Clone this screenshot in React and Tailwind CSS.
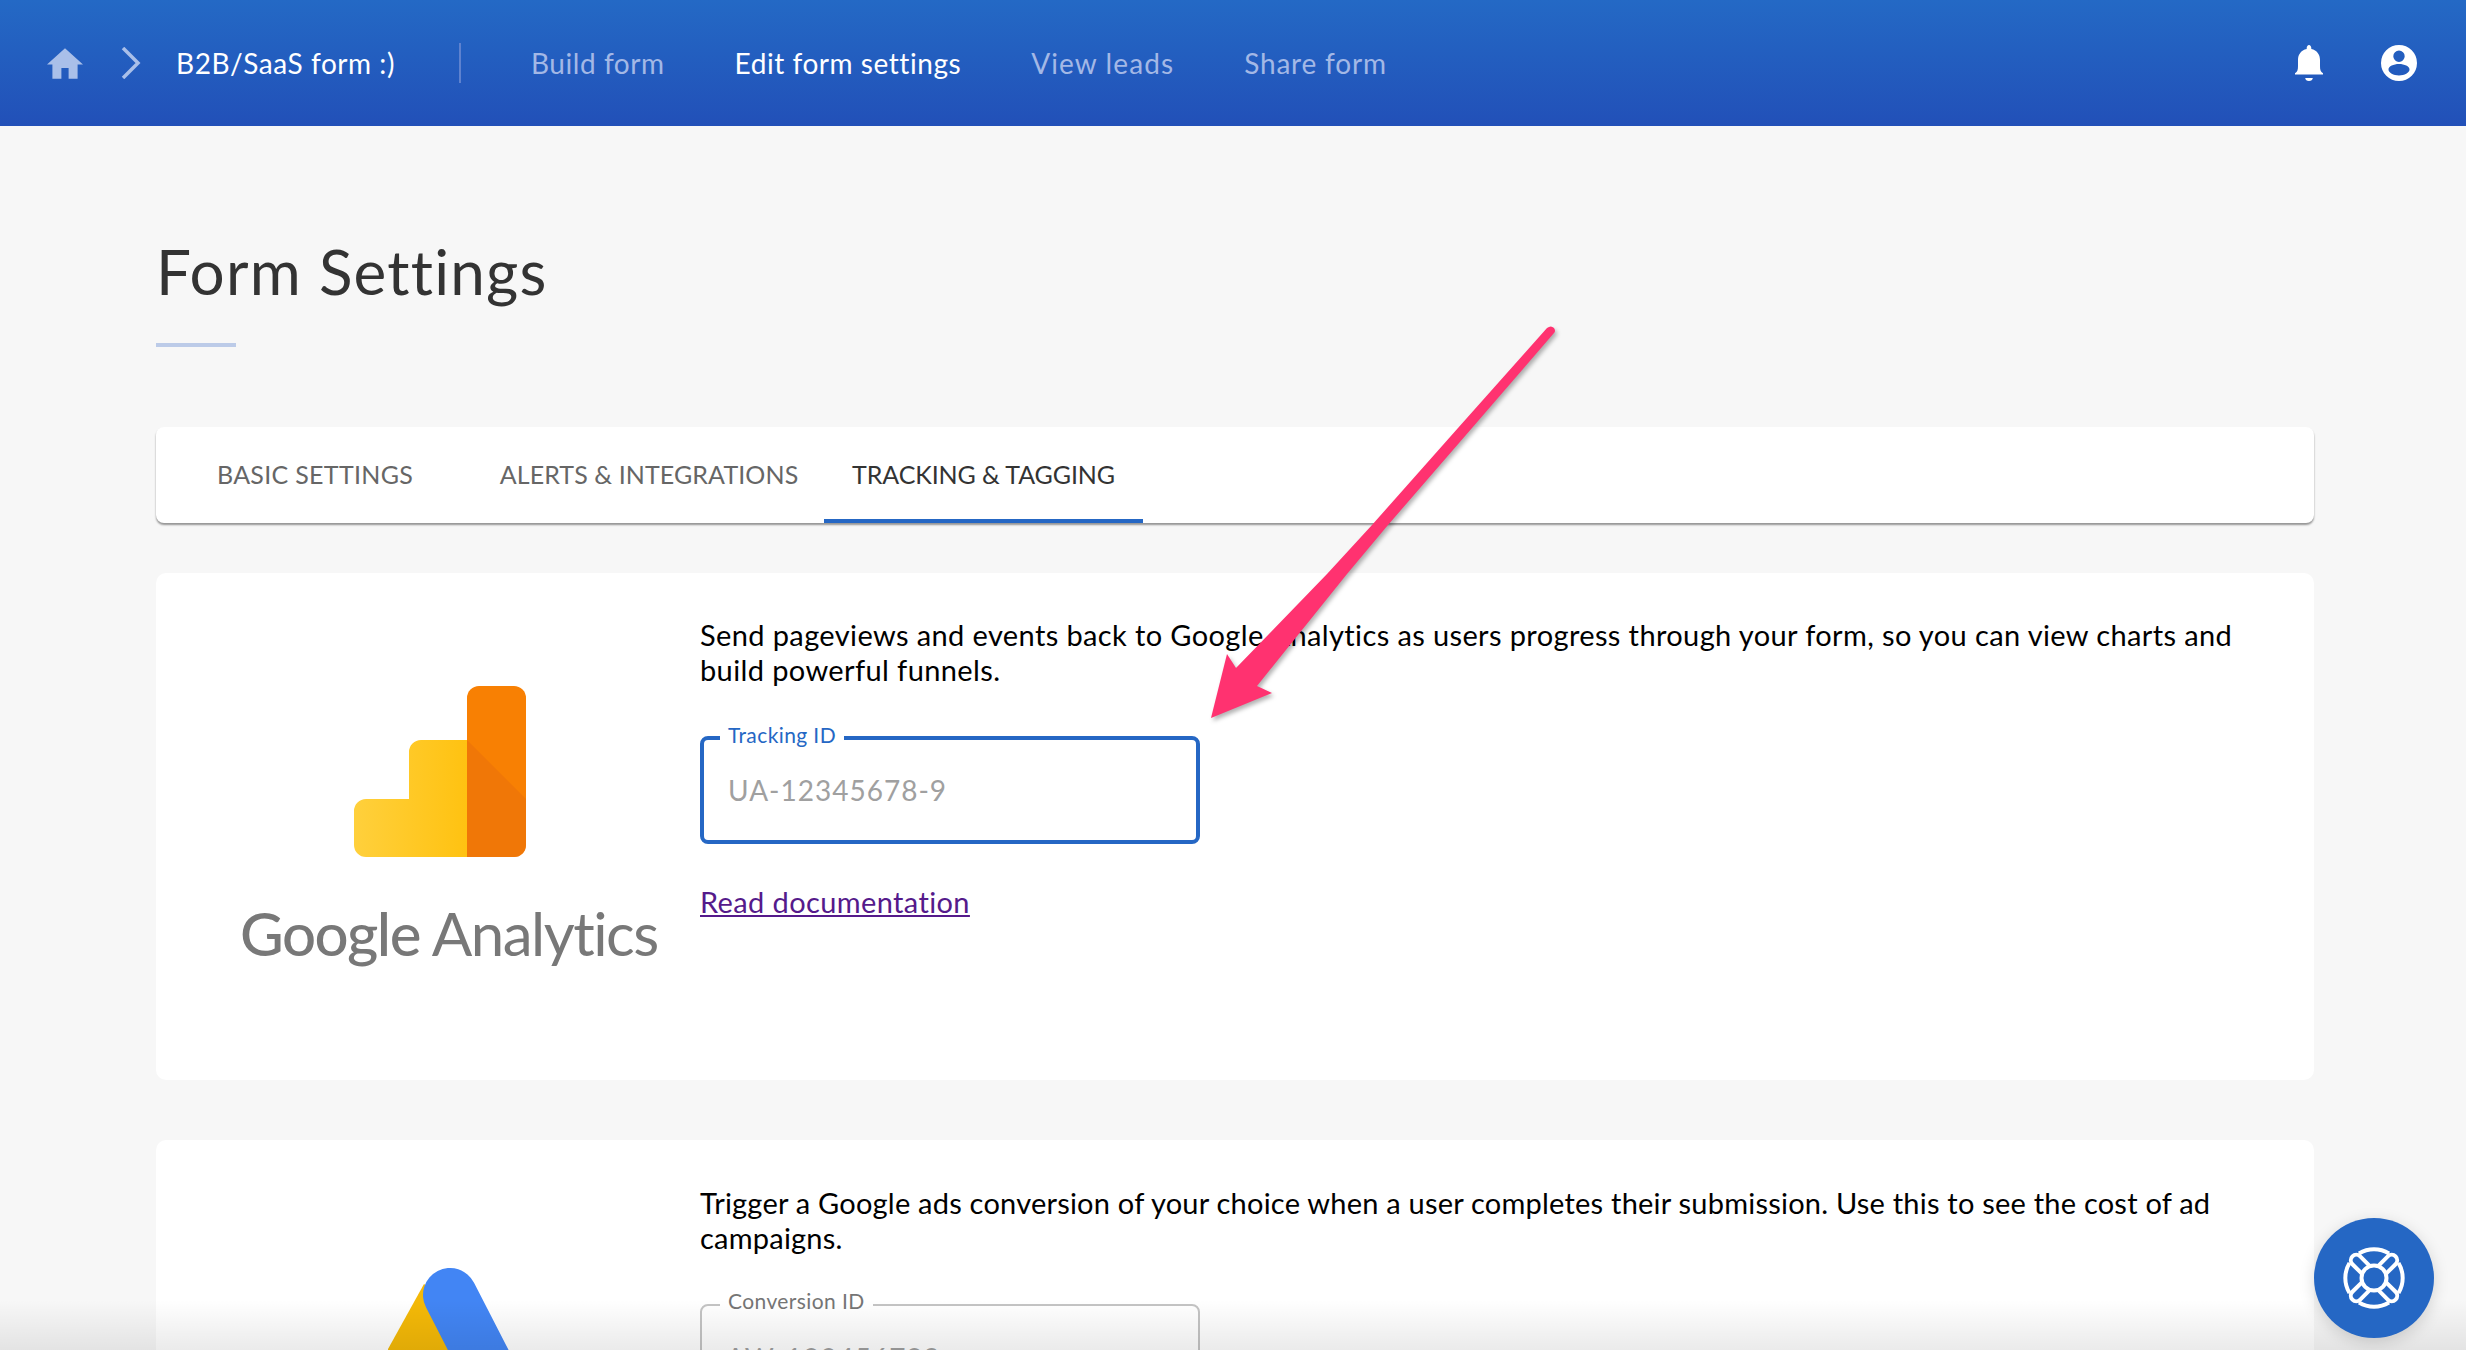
import { useState } from "react";

const NAV = [
  { label: "Build form", className: "text-[#a3b8e6]" },
  { label: "Edit form settings", className: "text-white" },
  { label: "View leads", className: "text-[#a3b8e6] tracking-[1.1px]" },
  { label: "Share form", className: "text-[#a3b8e6] tracking-[0.8px]" },
];

const TABS = [
  { label: "BASIC SETTINGS", className: "w-[318px] tracking-[0.3px] border-b-transparent text-[#666666]" },
  { label: "ALERTS & INTEGRATIONS", className: "w-[350px] tracking-[0.1px] border-b-transparent text-[#666666]" },
  { label: "TRACKING & TAGGING", className: "w-[319px] tracking-[-0.1px] border-b-[#2567c4] text-[#333333]" },
];

function HomeIcon() {
  return (
    <svg width="36" height="36" viewBox="2 3 20 17" className="w-[36px] h-[31px] fill-[#a9bfe9]">
      <path d="M10 20v-6h4v6h5v-8h3L12 3 2 12h3v8z" />
    </svg>
  );
}

function Chevron() {
  return (
    <svg viewBox="0 0 20 32" className="w-[20px] h-[32px] fill-none stroke-[#a9bfe9] stroke-[3.5]">
      <path d="M2 1l15 15L2 31" />
    </svg>
  );
}

function BellIcon() {
  return (
    <svg viewBox="0 0 28 36" className="w-[28px] h-[36px] fill-white">
      <path d="M14 36c2.2 0 3.6-1.3 3.8-3H10.200c.2 1.700 1.600 3 3.800 3zM28 29.500v-1.200c-2.500-1.800-3-3.500-3-7.300v-6c0-5.500-3-9.600-8.700-10.900V3c0-1.500-1-3-2.300-3s-2.300 1.500-2.300 3v1.100C6 5.400 3 9.500 3 15v6c0 3.800-.5 5.500-3 7.300v1.200z" />
    </svg>
  );
}

function AccountIcon() {
  return (
    <svg viewBox="0 0 36 36" className="w-[36px] h-[36px] fill-white">
      <path
        fillRule="evenodd"
        d="M18 0a18 18 0 1 1 0 36a18 18 0 0 1 0-36zM18 5.500a5.700 5.700 0 1 0 0 11.400a5.700 5.700 0 0 0 0-11.400zM18 19c-5.500 0-10.500 2.300-10.500 5.500S12.500 30.500 18 30.500s10.500-2.800 10.500-6S23.500 19 18 19z"
      />
    </svg>
  );
}

function LifeRing() {
  const arms = [45, 135, 225, 315];
  const arcs = [0, 90, 180, 270];
  return (
    <svg viewBox="-32 -32 64 64" className="w-[64px] h-[64px] fill-none stroke-white stroke-[4]">
      <circle r="12.500" />
      {arms.map((deg) => (
        <path key={deg} transform={`rotate(${deg})`} strokeLinecap="round" d="M-5.500 -12V-25a5.500 5.500 0 0 1 11 0V-12" />
      ))}
      {arcs.map((deg) => (
        <path key={deg} transform={`rotate(${deg})`} d="M-15 -24.500A29 29 0 0 1 15 -24.500" />
      ))}
    </svg>
  );
}

function AnalyticsLogo() {
  return (
    <svg viewBox="0 0 172 171" className="w-[172px] h-[171px]">
      <defs>
        <linearGradient id="gaYellow" x1="0" x2="1" y1="0" y2="0">
          <stop offset="0" stopColor="#ffd03c" />
          <stop offset="1" stopColor="#ffc211" />
        </linearGradient>
      </defs>
      <path d="M113 54H67a12 12 0 0 0-12 12v47H12a12 12 0 0 0-12 12v34a12 12 0 0 0 12 12h101z" fill="url(#gaYellow)" />
      <path d="M113 12a12 12 0 0 1 12-12h35a12 12 0 0 1 12 12v147a12 12 0 0 1-12 12h-47z" fill="#f88003" />
      <path d="M113 54l59 59v46a12 12 0 0 1-12 12h-47z" fill="#ee7409" opacity="0.75" />
    </svg>
  );
}

function AdsLogo() {
  return (
    <svg viewBox="0 0 126 110" className="w-[126px] h-[110px]">
      <path d="M36 16L0 81v29h70V40z" fill="#f4b907" />
      <path d="M62 27L120 140" fill="none" stroke="#4285f4" strokeWidth="54" strokeLinecap="round" />
    </svg>
  );
}

function TrackingField({ label, placeholder, focused }) {
  const [value, setValue] = useState("");
  return (
    <div
      className={
        "relative w-[500px] h-[108px] rounded-[8px] " +
        (focused ? "border-[4px] border-[#2567c4]" : "border-2 border-[#c4c4c4]")
      }
    >
      <span
        className={
          "absolute top-[-19px] px-[8px] bg-white text-[21px] leading-[28px] tracking-[0.4px] " +
          (focused ? "left-[16px] text-[#2567c4]" : "left-[18px] text-[#757575]")
        }
      >
        {label}
      </span>
      <input
        value={value}
        onChange={(e) => setValue(e.target.value)}
        placeholder={placeholder}
        className="w-full h-full px-[24px] bg-transparent text-[28px] tracking-[1px] outline-none placeholder:text-[#a0a0a0]"
      />
    </div>
  );
}

function Arrow() {
  return (
    <svg
      viewBox="0 0 360 410"
      className="absolute left-[1200px] top-[321px] w-[360px] h-[410px] drop-shadow-[2px_3px_2px_rgba(0,0,0,0.3)]"
    >
      <path
        d="M347 7Q351 4 354 7Q356 10 354 12L272 107L188 204L147 253L57 365L72 372L11 397L27 333L36 347L127 253L172 204L258 107Z"
        fill="#ff3270"
      />
    </svg>
  );
}

export default function App() {
  return (
    <div className="relative w-[2466px] h-[1350px] overflow-hidden bg-[#f7f7f7] font-['Lato',sans-serif]">
      <header className="h-[126px] flex items-center bg-gradient-to-b from-[#2469c5] to-[#2250b8] text-[28px] tracking-[0.55px]">
        <div className="ml-[47px]">
          <HomeIcon />
        </div>
        <div className="ml-[38px]">
          <Chevron />
        </div>
        <span className="ml-[35px] w-[283px] text-white">B2B/SaaS form :)</span>
        <div className="w-[2px] h-[40px] bg-[#5e82cf]" />
        <nav className="ml-[70px] flex gap-[70px]">
          {NAV.map((item) => (
            <a key={item.label} className={item.className}>
              {item.label}
            </a>
          ))}
        </nav>
        <div className="ml-auto mr-[49px] flex items-center gap-[58px]">
          <BellIcon />
          <AccountIcon />
        </div>
      </header>

      <main className="pl-[156px] pr-[152px]">
        <h1 className="mt-[109px] text-[62px] leading-[72px] tracking-[1.2px] text-[#333333]">Form Settings</h1>
        <div className="mt-[36px] w-[80px] h-[4px] bg-[#bccbe8]" />

        <div className="mt-[80px] h-[96px] flex rounded-[8px] bg-white shadow-[0_2px_2px_rgba(0,0,0,0.4)]">
          {TABS.map((tab) => (
            <div
              key={tab.label}
              className={
                "h-full flex items-center justify-center border-y-[4px] border-t-transparent text-[25px] " + tab.className
              }
            >
              {tab.label}
            </div>
          ))}
        </div>

        <section className="mt-[50px] h-[507px] flex rounded-[10px] bg-white">
          <div className="w-[544px] pt-[113px]">
            <div className="ml-[198px]">
              <AnalyticsLogo />
            </div>
            <div className="ml-[84px] mt-[38px] text-[60px] leading-[76px] text-[#787878] tracking-[-1.5px] whitespace-nowrap">
              <span className="font-medium">Google</span> Analytics
            </div>
          </div>
          <div className="pt-[44px] w-[1570px] text-[29px] leading-[35px] tracking-[0.38px] text-black">
            <p>
              Send pageviews and events back to Google Analytics as users progress through your form, so you can view
              charts and build powerful funnels.
            </p>
            <div className="mt-[49px]">
              <TrackingField label="Tracking ID" placeholder="UA-12345678-9" focused />
            </div>
            <a className="block mt-[40px] text-[#551a8b] underline">Read documentation</a>
          </div>
        </section>

        <section className="mt-[60px] h-[507px] flex rounded-[10px] bg-white">
          <div className="w-[544px] pt-[128px]">
            <div className="ml-[232px]">
              <AdsLogo />
            </div>
          </div>
          <div className="pt-[45px] w-[1570px] text-[29px] leading-[35px] tracking-[0.22px] text-black">
            <p>
              Trigger a Google ads conversion of your choice when a user completes their submission. Use this to see the
              cost of ad campaigns.
            </p>
            <div className="mt-[49px]">
              <TrackingField label="Conversion ID" placeholder="AW-123456789" />
            </div>
          </div>
        </section>
      </main>

      <Arrow />

      <div className="absolute inset-x-0 bottom-0 h-[50px] bg-gradient-to-b from-transparent to-black/[0.08]" />

      <button className="absolute left-[2314px] top-[1218px] w-[120px] h-[120px] rounded-full bg-[#2567c4] flex items-center justify-center shadow-[0_4px_16px_rgba(0,0,0,0.15)]">
        <LifeRing />
      </button>
    </div>
  );
}
